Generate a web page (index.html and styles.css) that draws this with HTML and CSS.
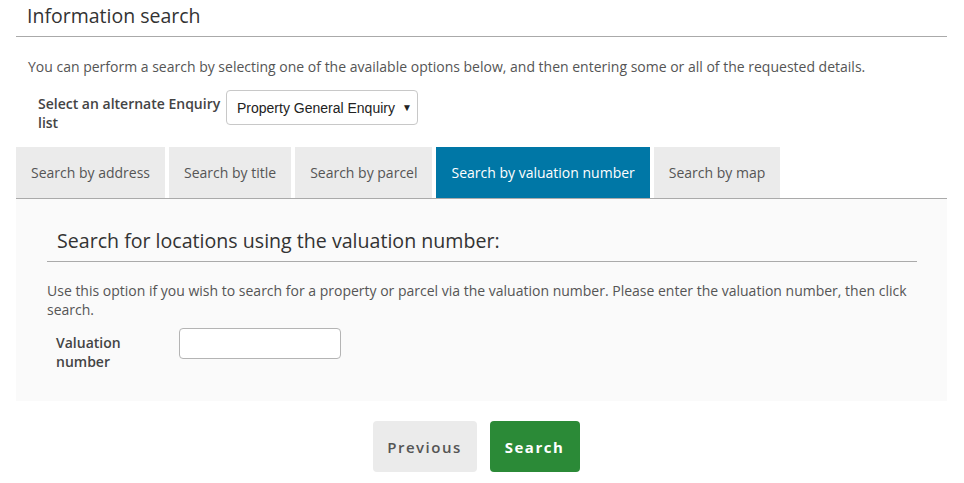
FILE: index.html
```html
<!DOCTYPE html>
<html>

<head>
  <link rel="stylesheet" href="styles.css">
</head>

<body>
  <div class="page">
    <div class="page-header">
      <h1>Information search</h1>
    </div>

    <p class="intro">You can perform a search by selecting one of the available options below, and then entering some or all of the requested details.</p>

    <div class="enquiry-row">
      <label class="enquiry-label" for="enquiry">Select an alternate Enquiry list</label>
      <div class="select-wrap">
        <select id="enquiry" class="enquiry-select">
          <option>Property General Enquiry</option>
        </select>
        <span class="select-arrow">&#9660;</span>
      </div>
    </div>

    <ul class="tabs">
      <li class="tab">Search by address</li>
      <li class="tab">Search by title</li>
      <li class="tab">Search by parcel</li>
      <li class="tab active">Search by valuation number</li>
      <li class="tab">Search by map</li>
    </ul>

    <div class="panel">
      <h2 class="panel-title">Search for locations using the valuation number:</h2>
      <p class="panel-text">Use this option if you wish to search for a property or parcel via the valuation number. Please enter the valuation number, then click search.</p>
      <div class="field-row">
        <label class="field-label" for="valnum">Valuation number</label>
        <input id="valnum" class="field-input" type="text">
      </div>
    </div>

    <div class="actions">
      <button class="btn btn-prev">Previous</button>
      <button class="btn btn-search">Search</button>
    </div>
  </div>
</body>
</html>
```

FILE: styles.css
```css
body
{
   margin: 0;
   background: #ffffff;
   font-family: "Open Sans", "Liberation Sans", sans-serif;
   color: #555555;
}

.page
{
   padding: 0 17px 0 16px;
}

/* header */
.page-header
{
   padding: 2px 0 6px 11px;
   border-bottom: 1px solid #aaaaaa;
}
.page-header h1
{
   margin: 0;
   font-size: 19.5px;
   font-weight: 400;
   line-height: 28px;
   color: #333333;
}

.intro
{
   margin: 20px 0 0 12px;
   font-size: 14px;
   line-height: 20px;
}

/* enquiry select */
.enquiry-row
{
   display: flex;
   align-items: flex-start;
   margin-top: 13px;
   padding-left: 22px;
}
.enquiry-label
{
   width: 188px;
   box-sizing: border-box;
   padding: 4px 1px 0 0;
   font-size: 14px;
   font-weight: 600;
   line-height: 19px;
   color: #444444;
}
.select-wrap
{
   position: relative;
}
.enquiry-select
{
   appearance: none;
   -webkit-appearance: none;
   width: 192px;
   height: 35px;
   padding: 0 0 0 10px;
   border: 1px solid #c8c8c8;
   border-radius: 4px;
   background: #ffffff;
   font-family: "Liberation Sans", Arial, sans-serif;
   font-size: 14px;
   color: #222222;
}
.select-arrow
{
   position: absolute;
   right: 6px;
   top: 10px;
   font-size: 10px;
   color: #222222;
   pointer-events: none;
}

/* tabs */
.tabs
{
   display: flex;
   gap: 4px;
   margin: 15px 0 0 0;
   padding: 0;
   list-style: none;
   border-bottom: 1px solid #aaaaaa;
}
.tab
{
   height: 51px;
   padding: 0 15px;
   display: flex;
   align-items: center;
   background: #ebebeb;
   font-size: 14px;
   color: #555555;
}
.tab.active
{
   background: #0077a6;
   color: #ffffff;
}

/* panel */
.panel
{
   background: #fafafa;
   padding: 28px 30px 30px 31px;
}
.panel-title
{
   margin: 0;
   padding: 0 0 6px 10px;
   border-bottom: 1px solid #aaaaaa;
   font-size: 19.6px;
   font-weight: 400;
   line-height: 28px;
   color: #333333;
}
.panel-text
{
   margin: 19px 0 0 0;
   font-size: 14px;
   line-height: 19px;
}
.field-row
{
   display: flex;
   align-items: flex-start;
   margin-top: 9px;
   padding-left: 9px;
}
.field-label
{
   width: 123px;
   box-sizing: border-box;
   padding: 5px 40px 0 0;
   font-size: 14px;
   font-weight: 600;
   line-height: 19px;
   color: #444444;
}
.field-input
{
   width: 162px;
   height: 31px;
   box-sizing: border-box;
   border: 1px solid #b4b4b4;
   border-radius: 4px;
   background: #ffffff;
}

/* buttons */
.actions
{
   display: flex;
   justify-content: center;
   gap: 13px;
   margin-top: 20px;
   padding-right: 11px;
}
.btn
{
   height: 51px;
   border: none;
   border-radius: 4px;
   font-family: "Open Sans", "Liberation Sans", sans-serif;
   font-size: 15px;
   font-weight: 700;
   letter-spacing: 1.5px;
}
.btn-prev
{
   width: 104px;
   background: #ebebeb;
   color: #555555;
   font-weight: 600;
}
.btn-search
{
   width: 90px;
   background: #2b8a37;
   color: #ffffff;
}
```
